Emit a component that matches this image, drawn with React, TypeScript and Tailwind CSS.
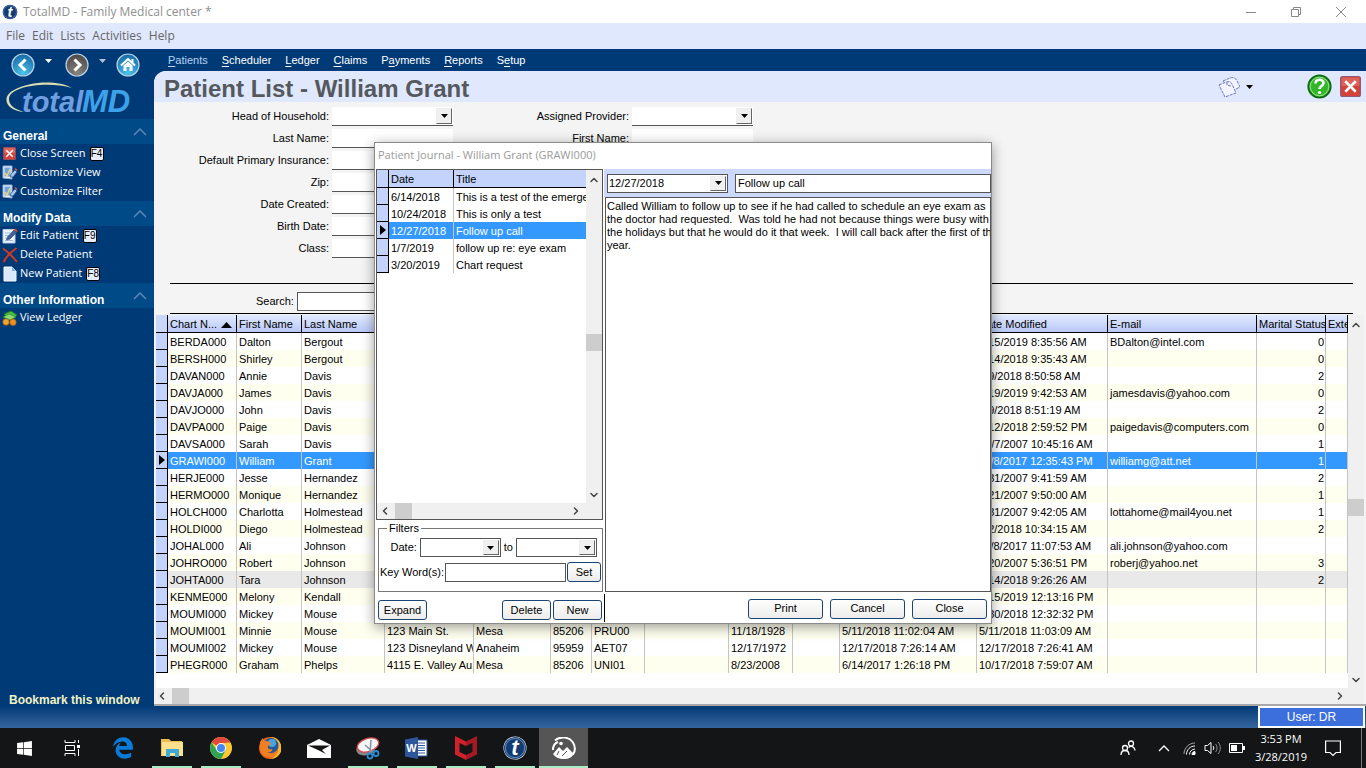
import React from 'react';
import clsx from 'clsx';
import { ChevronDown, ChevronLeft, ChevronRight, ChevronUp } from 'lucide-react';
import { FaEdgeLegacy, FaWindows } from 'react-icons/fa6';

interface Patient {
  chart: string;
  first: string;
  last: string;
  address?: string;
  city?: string;
  zip?: string;
  insurance?: string;
  birth?: string;
  created?: string;
  modified: string;
  email?: string;
  marital?: string;
}

const patients: Patient[] = [
  { chart: 'BERDA000', first: 'Dalton', last: 'Bergout', modified: '3/15/2019 8:35:56 AM', email: 'BDalton@intel.com', marital: '0' },
  { chart: 'BERSH000', first: 'Shirley', last: 'Bergout', modified: '5/14/2018 9:35:43 AM', marital: '0' },
  { chart: 'DAVAN000', first: 'Annie', last: 'Davis', modified: '5/9/2018 8:50:58 AM', marital: '2' },
  { chart: 'DAVJA000', first: 'James', last: 'Davis', modified: '3/19/2019 9:42:53 AM', email: 'jamesdavis@yahoo.com', marital: '0' },
  { chart: 'DAVJO000', first: 'John', last: 'Davis', modified: '5/9/2018 8:51:19 AM', marital: '2' },
  { chart: 'DAVPA000', first: 'Paige', last: 'Davis', modified: '6/12/2018 2:59:52 PM', email: 'paigedavis@computers.com', marital: '0' },
  { chart: 'DAVSA000', first: 'Sarah', last: 'Davis', modified: '12/7/2007 10:45:16 AM', marital: '1' },
  { chart: 'GRAWI000', first: 'William', last: 'Grant', modified: '11/8/2017 12:35:43 PM', email: 'williamg@att.net', marital: '1' },
  { chart: 'HERJE000', first: 'Jesse', last: 'Hernandez', modified: '7/31/2007 9:41:59 AM', marital: '2' },
  { chart: 'HERMO000', first: 'Monique', last: 'Hernandez', modified: '8/21/2007 9:50:00 AM', marital: '1' },
  { chart: 'HOLCH000', first: 'Charlotta', last: 'Holmestead', modified: '7/31/2007 9:42:05 AM', email: 'lottahome@mail4you.net', marital: '1' },
  { chart: 'HOLDI000', first: 'Diego', last: 'Holmestead', modified: '5/2/2018 10:34:15 AM', marital: '2' },
  { chart: 'JOHAL000', first: 'Ali', last: 'Johnson', modified: '11/8/2017 11:07:53 AM', email: 'ali.johnson@yahoo.com' },
  { chart: 'JOHRO000', first: 'Robert', last: 'Johnson', modified: '8/20/2007 5:36:51 PM', email: 'roberj@yahoo.net', marital: '3' },
  { chart: 'JOHTA000', first: 'Tara', last: 'Johnson', modified: '5/14/2018 9:26:26 AM', marital: '2' },
  { chart: 'KENME000', first: 'Melony', last: 'Kendall', modified: '3/15/2019 12:13:16 PM' },
  { chart: 'MOUMI000', first: 'Mickey', last: 'Mouse', modified: '5/30/2018 12:32:32 PM' },
  { chart: 'MOUMI001', first: 'Minnie', last: 'Mouse', address: '123 Main St.', city: 'Mesa', zip: '85206', insurance: 'PRU00', birth: '11/18/1928', created: '5/11/2018 11:02:04 AM', modified: '5/11/2018 11:03:09 AM' },
  { chart: 'MOUMI002', first: 'Mickey', last: 'Mouse', address: '123 Disneyland W', city: 'Anaheim', zip: '95959', insurance: 'AET07', birth: '12/17/1972', created: '12/17/2018 7:26:14 AM', modified: '12/17/2018 7:26:41 AM' },
  { chart: 'PHEGR000', first: 'Graham', last: 'Phelps', address: '4115 E. Valley Au', city: 'Mesa', zip: '85206', insurance: 'UNI01', birth: '8/23/2008', created: '6/14/2017 1:26:18 PM', modified: '10/17/2018 7:59:07 AM' },
];

const columns: { key: keyof Patient | null; title: string; width: string }[] = [
  { key: 'chart', title: 'Chart N...', width: 'w-[69px]' },
  { key: 'first', title: 'First Name', width: 'w-[65px]' },
  { key: 'last', title: 'Last Name', width: 'w-[83px]' },
  { key: 'address', title: '', width: 'w-[89px]' },
  { key: 'city', title: '', width: 'w-[77px]' },
  { key: 'zip', title: '', width: 'w-[41px]' },
  { key: 'insurance', title: '', width: 'w-[53px]' },
  { key: null, title: '', width: 'w-[84px]' },
  { key: 'birth', title: '', width: 'w-[64px]' },
  { key: null, title: '', width: 'w-[47px]' },
  { key: 'created', title: '', width: 'w-[137px]' },
  { key: 'modified', title: 'Date Modified', width: 'w-[131px]' },
  { key: 'email', title: 'E-mail', width: 'w-[149px]' },
  { key: 'marital', title: 'Marital Status', width: 'w-[69px]' },
  { key: null, title: 'Exte', width: 'w-auto' },
];

const journal = [
  { date: '6/14/2018', title: 'This is a test of the emergen' },
  { date: '10/24/2018', title: 'This is only a test' },
  { date: '12/27/2018', title: 'Follow up call' },
  { date: '1/7/2019', title: 'follow up re: eye exam' },
  { date: '3/20/2019', title: 'Chart request' },
];

const note = [
  'Called William to follow up to see if he had called to schedule an eye exam as',
  'the doctor had requested.  Was told he had not because things were busy with',
  'the holidays but that he would do it that week.  I will call back after the first of the',
  'year.',
].join('\n');

/* ---------- small icons ---------- */

const TLogo = ({ size }: { size: number }) => (
  <svg width={size} height={size} viewBox="0 0 24 24">
    <circle cx="12" cy="12" r="11.5" fill="#fff" />
    <circle cx="12" cy="12" r="11" fill="#123a73" />
    <circle cx="12" cy="12" r="9.6" fill="none" stroke="#7fa3cf" strokeWidth="0.8" />
    <text x="12" y="19" textAnchor="middle" fontFamily="Liberation Sans, sans-serif" fontWeight="bold" fontStyle="italic" fontSize="22" fill="#fff">t</text>
  </svg>
);

const RoundIcon = ({ kind }: { kind: 'back' | 'forward' | 'home' }) => (
  <svg width="24" height="24" viewBox="0 0 24 24">
    <defs>
      <radialGradient id={`round-${kind}`} cx="50%" cy="85%" r="85%">
        <stop offset="0" stopColor={kind === 'forward' ? '#8a8480' : '#4cc4ea'} />
        <stop offset="1" stopColor={kind === 'forward' ? '#4c4745' : '#1468a4'} />
      </radialGradient>
    </defs>
    <circle cx="12" cy="12" r="11" fill={`url(#round-${kind})`} stroke="#b9d4e8" strokeWidth="1.2" />
    {kind === 'back' && <path d="M14.5 6.5 9 12l5.500 5.500" fill="none" stroke="#fff" strokeWidth="3" />}
    {kind === 'forward' && <path d="M9.500 6.500 15 12l-5.500 5.500" fill="none" stroke="#fff" strokeWidth="3" />}
    {kind === 'home' && (
      <>
        <path d="M5 12.500 12 6l7 6.500" fill="none" stroke="#fff" strokeWidth="2" />
        <path d="M7.500 12.500 12 8.500l4.500 4V18h-3v-4h-3v4h-3z" fill="#fff" />
        <path d="M15.500 6h2v4l-2-2z" fill="#fff" />
      </>
    )}
  </svg>
);

const Caret = ({ className = '' }: { className?: string }) => (
  <svg width="7" height="4" viewBox="0 0 7 4" className={className} fill="currentColor">
    <path d="M0 0h7L3.500 4z" />
  </svg>
);

const Marker = () => (
  <svg width="6" height="10" viewBox="0 0 6 10" className="mx-auto block">
    <path d="M0 0v10l6-5z" />
  </svg>
);

const CloseIcon = ({ size }: { size: number }) => (
  <svg width={size} height={size} viewBox="0 0 20 20">
    <rect x="0.500" y="0.500" width="19" height="19" rx="2" fill="#d3423a" stroke="#8c5b78" />
    <rect x="1.500" y="1.500" width="17" height="8" rx="1" fill="#dd6259" />
    <path d="m5 5 10 10M15 5 5 15" stroke="#fff" strokeWidth="2.400" />
  </svg>
);

const CustomizeIcon = () => (
  <svg width="16" height="16" viewBox="0 0 16 16">
    <path d="M1 1h9v13l-9-1z" fill="#eef4fd" stroke="#8fabd2" />
    <path d="M2.500 2.500h6v9h-6z" fill="#6ea3e2" />
    <path d="m3 8 2 3 3-7" fill="none" stroke="#f2d36a" strokeWidth="1.500" />
    <path d="m8 12 1-3 4-4 2 2-4 5z" fill="#a8c4ea" stroke="#26497e" strokeWidth="0.700" />
    <path d="m12.500 4 1-1 2 2-1 1z" fill="#cc5f54" />
  </svg>
);

const EditIcon = () => (
  <svg width="16" height="16" viewBox="0 0 16 16">
    <path d="M1 1.500h12V15H1z" fill="#eef4fc" stroke="#b5c9e4" />
    <path d="M3 5h6M3 7.500h4M3 10h3M3 12.500h8" stroke="#9fb8dc" />
    <path d="m4.500 12 1-3L12 2l2.500 2.500L8 11z" fill="#3f6396" stroke="#1f3f70" strokeWidth="0.600" />
    <path d="m12 2 1.500-1.500L16 3l-1.500 1.500z" fill="#c9402f" />
  </svg>
);

const DeleteIcon = () => (
  <svg width="16" height="16" viewBox="0 0 16 16">
    <path d="M1 1.500C6 5 11 10 15 15M14.500 1C9 5 4 10 1.500 15" fill="none" stroke="#d0391f" strokeWidth="2" />
  </svg>
);

const NewIcon = () => (
  <svg width="16" height="16" viewBox="0 0 16 16">
    <path d="M2 1h8l4 4v10H2z" fill="#d9e8fa" stroke="#f3f8ff" />
    <path d="M10 1v4h4z" fill="#7fa9dc" />
  </svg>
);

const LedgerIcon = () => (
  <svg width="16" height="16" viewBox="0 0 16 16">
    <path d="m2 4 7-3 6 4-6 5z" fill="#4fbf4a" stroke="#1f7a2a" />
    <path d="m1 7 6-3 7 3-6 3z" fill="#8bdc6c" stroke="#2b8f35" strokeWidth="0.700" />
    <circle cx="4" cy="12" r="3.200" fill="#f3a42a" stroke="#a8620d" strokeWidth="0.700" />
    <circle cx="11" cy="12.300" r="3.200" fill="#ee8f22" stroke="#a8620d" strokeWidth="0.700" />
  </svg>
);

/* ---------- shared controls ---------- */

const Combo = ({ className, boxed, value = '', label }: { className: string; boxed?: boolean; value?: string; label: string }) => (
  <div className={clsx('relative h-[19px] bg-white', className, boxed ? 'border border-[#555]' : 'border-b border-[#555]')}>
    <select aria-label={label} className="block h-full w-full appearance-none bg-transparent px-px text-[11px] outline-none" defaultValue={value}>
      <option value={value}>{value}</option>
    </select>
    <span className="pointer-events-none absolute top-px right-px bottom-px flex w-4 items-center justify-center border border-t-[#eee] border-r-[#666] border-b-[#666] border-l-[#eee] bg-[#f0f0f0]">
      <Caret />
    </span>
  </div>
);

const PushButton = ({ children, className }: { children: React.ReactNode; className: string }) => (
  <button className={clsx('h-5 rounded-[3px] border border-[#1c4474] bg-linear-to-b from-white to-[#ececea] text-[11px] leading-none', className)}>
    {children}
  </button>
);

const VScroll = ({ className, thumb }: { className?: string; thumb: string }) => (
  <div className={clsx('flex w-4 shrink-0 flex-col items-center bg-[#f0f0f0] text-[#444]', className)}>
    <ChevronUp size={12} strokeWidth={3} className="mt-1 shrink-0" />
    <div className="flex w-full flex-1 flex-col">
      <div className={thumb} />
      <div className="h-[17px] w-full bg-[#cdcdcd]" />
    </div>
    <ChevronDown size={12} strokeWidth={3} className="mb-0.5 shrink-0" />
  </div>
);

const HScroll = ({ className }: { className?: string }) => (
  <div className={clsx('flex h-4 shrink-0 items-center bg-[#f0f0f0] text-[#444]', className)}>
    <ChevronLeft size={12} strokeWidth={3} className="mx-0.5" />
    <div className="ml-0.5 h-full w-[17px] bg-[#cdcdcd]" />
    <ChevronRight size={12} strokeWidth={3} className="ml-auto" />
  </div>
);

const Gutter = ({ active }: { active?: boolean }) => (
  <td className="border-r border-b border-black bg-[#c3d3fb] p-0">{active && <Marker />}</td>
);

/* ---------- sidebar ---------- */

const sections = [
  {
    title: 'General',
    items: [
      { label: 'Close Screen', key: 'F4', icon: <CloseIcon size={13} /> },
      { label: 'Customize View', icon: <CustomizeIcon /> },
      { label: 'Customize Filter', icon: <CustomizeIcon /> },
    ],
  },
  {
    title: 'Modify Data',
    items: [
      { label: 'Edit Patient', key: 'F9', icon: <EditIcon /> },
      { label: 'Delete Patient', icon: <DeleteIcon /> },
      { label: 'New Patient', key: 'F8', icon: <NewIcon /> },
    ],
  },
  { title: 'Other Information', items: [{ label: 'View Ledger', icon: <LedgerIcon /> }] },
];

const Sidebar = () => (
  <aside className="flex w-[154px] shrink-0 flex-col bg-[#003a76]">
    <div className="flex h-8 items-center pl-[11px] text-white">
      <button aria-label="Back"><RoundIcon kind="back" /></button>
      <Caret className="mx-[10px] mb-2" />
      <button aria-label="Forward" className="ml-[3px]"><RoundIcon kind="forward" /></button>
      <Caret className="mx-[10px] mb-2 opacity-70" />
      <button aria-label="Home"><RoundIcon kind="home" /></button>
    </div>
    <svg width="140" height="38" viewBox="0 0 140 38" className="shrink-0">
      <path d="M72 7C48 0 9 5 9 18c0 6 5 10 15 13C5 30 1 15 14 9 30 0 58-1 72 7z" fill="#d9dcae" />
      <g fontFamily="Liberation Sans, sans-serif" fontStyle="italic" fontWeight="bold">
        <text x="22" y="31" fontSize="29" fill="#6f9fe0">total</text>
        <text x="82" y="31" fontSize="31" fill="#3ea2ea">MD</text>
      </g>
    </svg>
    {sections.map((section) => (
      <section key={section.title}>
        <h2 className="flex h-[25px] items-end justify-between bg-[#004a88] pl-[3px] text-[12px] leading-4 font-bold text-white">
          {section.title}
          <svg width="14" height="8" viewBox="0 0 14 8" className="mr-[7px] mb-2">
            <path d="m1 7 6-6 6 6" fill="none" stroke="#5c87b4" strokeWidth="1.500" />
          </svg>
        </h2>
        <ul>
          {section.items.map((item: { label: string; key?: string; icon: React.ReactNode }) => (
            <li key={item.label} className="flex h-[19px] items-center">
              <span className="flex w-5 shrink-0 justify-center pr-px">{item.icon}</span>
              <a href="#" className="font-['Open_Sans',sans-serif] text-[11px] text-white">{item.label}</a>
              {item.key && (
                <kbd className="ml-1 flex h-3.5 w-3.5 items-center justify-center rounded-[2px] border border-black bg-[#e6ecf8] font-['Liberation_Sans',sans-serif] text-[10px] leading-none text-black">
                  {item.key}
                </kbd>
              )}
            </li>
          ))}
        </ul>
      </section>
    ))}
    <a href="#" className="mt-auto pl-[9px] text-[12px] leading-3 font-bold text-[#f2f2c4]">Bookmark this window</a>
  </aside>
);

/* ---------- patient list ---------- */

const nav = [
  ['', 'P', 'atients'],
  ['', 'S', 'cheduler'],
  ['', 'L', 'edger'],
  ['', 'C', 'laims'],
  ['P', 'a', 'yments'],
  ['', 'R', 'eports'],
  ['S', 'e', 'tup'],
];

const leftFields = ['Last Name:', 'Default Primary Insurance:', 'Zip:', 'Date Created:', 'Birth Date:', 'Class:'];

const FilterForm = () => (
  <form className="flex gap-0 pt-[3px]">
    <div className="w-[299px]">
      <div className="flex h-[22px] items-center justify-end gap-[3px]">
        <span>Head of Household:</span>
        <Combo label="Head of Household" className="w-[121px]" />
      </div>
      {leftFields.map((name) => (
        <label key={name} className="flex h-[22px] items-center justify-end gap-[3px]">
          {name}
          <input className="h-[19px] w-[121px] border-b border-[#555] bg-white outline-none" />
        </label>
      ))}
    </div>
    <div className="w-[300px]">
      <div className="flex h-[22px] items-center justify-end gap-[3px]">
        <span>Assigned Provider:</span>
        <Combo label="Assigned Provider" className="w-[121px]" />
      </div>
      <label className="flex h-[22px] items-center justify-end gap-[3px]">
        First Name:
        <input className="h-[19px] w-[121px] border-b border-[#555] bg-white outline-none" />
      </label>
    </div>
  </form>
);

const PatientTable = () => (
  <table className="w-full table-fixed border-separate border-spacing-0 text-left">
    <colgroup>
      <col className="w-3" />
      {columns.map((col, i) => (
        <col key={i} className={col.width} />
      ))}
    </colgroup>
    <thead>
      <tr className="h-[18px]">
        <th className="border-r border-b border-black bg-[#c9d7fb] p-0" />
        {columns.map((col, i) => (
          <th
            key={i}
            className="overflow-hidden border-r border-b border-black bg-linear-to-b from-[#e2eaff] to-[#b9c9f6] p-0 pl-0.5 leading-4 font-normal whitespace-nowrap"
          >
            {col.title}
            {i === 0 && (
              <svg width="11" height="6" viewBox="0 0 11 6" className="ml-1 inline-block align-middle">
                <path d="M5.500 0 11 6H0z" />
              </svg>
            )}
          </th>
        ))}
      </tr>
    </thead>
    <tbody>
      {patients.map((p, row) => {
        const selected = p.chart === 'GRAWI000';
        return (
          <tr
            key={p.chart}
            className={clsx(
              'h-[17px]',
              selected ? 'bg-[#3399ff] text-white' : p.chart === 'JOHTA000' ? 'bg-[#e9e9e9]' : row % 2 ? 'bg-[#fffff0]' : 'bg-white'
            )}
          >
            <Gutter active={selected} />
            {columns.map((col, i) => (
              <td
                key={i}
                className={clsx(
                  'overflow-hidden border-r border-[#c4c4c4] p-0 pl-0.5 leading-4 whitespace-nowrap',
                  col.key === 'marital' && 'pr-px text-right'
                )}
              >
                {col.key ? p[col.key] : ''}
              </td>
            ))}
          </tr>
        );
      })}
    </tbody>
  </table>
);

/* ---------- journal window ---------- */

const JournalDialog = () => (
  <div
    role="dialog"
    aria-label="Patient Journal"
    className="absolute inset-x-0 top-[142px] mx-auto w-[618px] border border-[#8a8a8a] bg-white shadow-[0_3px_12px_rgba(0,0,0,0.4)]"
  >
    <h2 className="h-[26px] pl-[3px] font-['Open_Sans',sans-serif] text-[11px] leading-6 text-[#999]">
      Patient Journal - William Grant (GRAWI000)
    </h2>
    <div className="flex">
      <div className="flex w-[229px] shrink-0 flex-col pl-px">
        <div className="mr-px flex h-[351px] flex-col border border-[#555]">
          <div className="flex min-h-0 flex-1">
            <div className="flex-1">
              <table className="w-full table-fixed border-separate border-spacing-0 text-left">
                <colgroup>
                  <col className="w-3" />
                  <col className="w-[65px]" />
                  <col />
                </colgroup>
                <thead>
                  <tr className="h-[18px]">
                    <th className="border-r border-b border-black bg-[#c3d3fb] p-0" />
                    <th className="border-r border-b border-black bg-[#c3d3fb] p-0 pl-0.5 leading-4 font-normal">Date</th>
                    <th className="border-b border-black bg-[#c3d3fb] p-0 pl-0.5 leading-4 font-normal">Title</th>
                  </tr>
                </thead>
                <tbody>
                  {journal.map((entry) => {
                    const selected = entry.date === '12/27/2018';
                    return (
                      <tr key={entry.date} className={clsx('h-[17px]', selected && 'bg-[#3399ff] text-white')}>
                        <Gutter active={selected} />
                        <td className="overflow-hidden border-r border-[#c4c4c4] p-0 pl-0.5 leading-4">{entry.date}</td>
                        <td className="overflow-hidden p-0 pl-0.5 leading-4 whitespace-nowrap">{entry.title}</td>
                      </tr>
                    );
                  })}
                </tbody>
              </table>
            </div>
            <VScroll thumb="basis-[49%]" />
          </div>
          <HScroll className="pr-5" />
        </div>

        <fieldset className="mt-0.5 mr-px ml-0.5 h-[70px] border border-[#777]">
          <legend className="ml-2 px-0.5 leading-[13px]">Filters</legend>
          <div className="mt-[3px] flex items-center justify-end gap-[3px] pr-[5px]">
            <span>Date:</span>
            <Combo boxed label="From date" className="w-[81px]" />
            <span>to</span>
            <Combo boxed label="To date" className="w-[81px]" />
          </div>
          <div className="mt-[5px] flex items-center justify-end gap-px pr-px whitespace-nowrap">
            <label className="flex items-center gap-px">
              Key Word(s):
              <input className="h-[19px] w-[121px] border border-[#555] outline-none" />
            </label>
            <PushButton className="w-[34px]">Set</PushButton>
          </div>
        </fieldset>
        <div className="mt-2 flex items-center gap-0.5 pr-0.5 pl-0.5">
          <PushButton className="w-[49px]">Expand</PushButton>
          <PushButton className="ml-auto w-[49px]">Delete</PushButton>
          <PushButton className="w-[49px]">New</PushButton>
        </div>
      </div>

      <div className="flex min-w-0 flex-1 flex-col">
        <div className="flex h-7 items-center gap-[7px] bg-[#ccd9fc] pl-[3px]">
          <Combo boxed label="Entry date" value="12/27/2018" className="w-[121px]" />
          <input aria-label="Entry title" defaultValue="Follow up call" className="h-[19px] min-w-0 flex-1 border border-[#555] bg-white px-0.5 outline-none" />
        </div>
        <textarea
          aria-label="Journal note"
          defaultValue={note}
          className="ml-px block h-[395px] resize-none overflow-hidden border border-[#555] py-0.5 pl-px leading-[13px] whitespace-pre outline-none"
        />
        <div className="flex h-[31px] items-center">
          <div className="h-7 border-l border-black" />
          <div className="ml-auto flex gap-[7px] pt-0.5 pr-1">
            <PushButton className="w-[75px]">Print</PushButton>
            <PushButton className="w-[75px]">Cancel</PushButton>
            <PushButton className="w-[75px]">Close</PushButton>
          </div>
        </div>
      </div>
    </div>
  </div>
);

/* ---------- taskbar ---------- */

const tasks: { name: string; open?: boolean; active?: boolean; icon: React.ReactNode }[] = [
  { name: 'Edge', icon: <FaEdgeLegacy size={22} color="#0a7bd8" /> },
  {
    name: 'File Explorer',
    open: true,
    icon: (
      <svg width="22" height="20" viewBox="0 0 22 20">
        <path d="M0 1h8l2 2h11v15H0z" fill="#e9bd4e" />
        <path d="M1 4h21v14H1z" fill="#fbe08e" />
        <path d="M5 19v-8h13v8h-4v-4H9v4z" fill="#3fa9d8" />
      </svg>
    ),
  },
  {
    name: 'Chrome',
    open: true,
    icon: (
      <svg width="22" height="22" viewBox="0 0 22 22">
        <circle cx="11" cy="11" r="11" fill="#fcc934" />
        <path d="M11 11 1.500 5.500A11 11 0 0 1 20.500 5.500L11 6z" fill="#e04a3c" />
        <path d="M1.500 5.500A11 11 0 0 0 11 22l4.500-8.500L11 11 6.500 13z" fill="#2fa455" />
        <circle cx="11" cy="11" r="5" fill="#fff" />
        <circle cx="11" cy="11" r="4" fill="#4688f1" />
      </svg>
    ),
  },
  {
    name: 'Firefox',
    icon: (
      <svg width="22" height="22" viewBox="0 0 22 22">
        <circle cx="11" cy="11" r="11" fill="#e8641b" />
        <path d="M11 0a11 11 0 0 1 8 19c-3 3-8 3-8 3 6-2 9-8 8-14-1-4-4-7-8-8z" fill="#f9b72b" />
        <circle cx="12" cy="8.500" r="7.500" fill="#245a9c" />
        <circle cx="13" cy="6" r="4" fill="#4aa3dc" />
        <path d="M1 5c1-2 2-3 3-4 0 2 1 3 3 3 2 0 4 1 5 3l-3 2c-1 2 1 4 4 3 1 2-2 4-5 3 4 3 9 1 11-3 0 5-4 9-9 8-6 0-9-5-9-9z" fill="#f07f22" />
      </svg>
    ),
  },
  {
    name: 'Mail',
    icon: (
      <svg width="24" height="19" viewBox="0 0 24 19">
        <path d="M0 6 12 0l12 6v13H0z" fill="#fff" />
        <path d="M1 6.500h22L15 11l4 4-8-4z" fill="#151515" />
      </svg>
    ),
  },
  {
    name: 'Snipping Tool',
    open: true,
    icon: (
      <svg width="24" height="23" viewBox="0 0 24 23">
        <ellipse cx="10" cy="11" rx="10" ry="7" fill="#8b8585" transform="rotate(-20 10 11)" />
        <ellipse cx="12" cy="8" rx="11" ry="6.500" fill="#f6f6f6" stroke="#d44a4a" strokeWidth="1.300" transform="rotate(-18 12 8)" />
        <path d="m15 3-1 13M9 8l9 8" stroke="#8496a8" strokeWidth="1.600" />
        <circle cx="14" cy="19" r="2.500" fill="none" stroke="#2a8ad4" strokeWidth="1.800" />
        <circle cx="20" cy="16.500" r="2.500" fill="none" stroke="#2a8ad4" strokeWidth="1.800" />
      </svg>
    ),
  },
  {
    name: 'Word',
    open: true,
    icon: (
      <svg width="23" height="22" viewBox="0 0 23 22">
        <path d="M12 3h10v16H12z" fill="#fff" stroke="#2b579a" />
        <path d="M13 6h7M13 8.500h7M13 11h7M13 13.500h7M13 16h7" stroke="#2b579a" />
        <path d="M0 2.500 13 0v22L0 19.500z" fill="#2b579a" />
        <text x="6.500" y="15" textAnchor="middle" fontFamily="Liberation Sans, sans-serif" fontWeight="bold" fontSize="11" fill="#fff">W</text>
      </svg>
    ),
  },
  {
    name: 'McAfee',
    open: true,
    icon: (
      <svg width="22" height="24" viewBox="0 0 22 24">
        <path d="M0 0 11 5.500V10L4.500 7v9l6.500 3v5L0 18.500z" fill="#d0222c" />
        <path d="M22 0 11 5.500V10l6.500-3v9L11 19v5l11-5.500z" fill="#a51a22" />
      </svg>
    ),
  },
  { name: 'TotalMD', open: true, icon: <TLogo size={24} /> },
  {
    name: 'Photos',
    open: true,
    active: true,
    icon: (
      <svg width="24" height="22" viewBox="0 0 24 22">
        <path d="M3 3.500C8-1 17-.500 21 5.500c3 5 2 9 0 12M1 13c0-4 2-7 5-8" fill="none" stroke="#fff" strokeWidth="2" />
        <path d="M1 17 7 10l4 4 4-4 7 7c-2 3-5 5-10 5S3 20 1 17z" fill="#fff" />
        <circle cx="9" cy="6.500" r="1.800" fill="#fff" />
        <path d="m7 14-2 4M15 14l-5 5" stroke="#555" />
      </svg>
    ),
  },
];

const Taskbar = () => (
  <footer className="flex h-10 items-center bg-[#141516] text-white">
    <button aria-label="Start" className="flex h-full w-12 items-center justify-center"><FaWindows size={17} /></button>
    <button aria-label="Task view" className="mr-0.5 flex h-full w-12 items-center justify-center">
      <svg width="17" height="16" viewBox="0 0 17 16" fill="none" stroke="#fff">
        <path d="M1 0v2.500h10V0M1 16v-2.500h10V16M1.500 5.500h9v5h-9zM14.500 0v3M14.500 9v7" />
        <path d="M13 5h3v3h-3z" fill="#fff" stroke="none" />
      </svg>
    </button>
    {tasks.map((task) => (
      <button
        key={task.name}
        aria-label={task.name}
        className={clsx('flex h-full w-[49px] flex-col items-center', task.active && 'bg-[#555]')}
      >
        <span className="flex flex-1 items-center pt-0.5">{task.icon}</span>
        <span className={clsx('h-0.5', task.active ? 'w-full' : 'w-10', task.open && 'bg-[#a9ecc4]')} />
      </button>
    ))}
    <div className="ml-auto flex h-full items-center">
      <svg width="16" height="16" viewBox="0 0 16 16" fill="none" stroke="#fff" strokeWidth="1.300">
        <circle cx="5" cy="8" r="2.500" />
        <path d="M1 15c0-6 8-6 8 0" />
        <circle cx="11" cy="3.500" r="2.500" />
        <path d="M8.500 7.500c3-2.500 6.500 0 6.500 3" />
      </svg>
      <svg width="12" height="7" viewBox="0 0 12 7" className="ml-[22px]" fill="none" stroke="#fff" strokeWidth="1.300">
        <path d="m1 6 5-5 5 5" />
      </svg>
      <svg width="13" height="13" viewBox="0 0 13 13" className="ml-[13px]" fill="none" stroke="#fff">
        <path d="M1 12C1 6 6 1 12 1" opacity="0.600" />
        <path d="M3.500 12.500c0-5 4-8.500 8.500-8.500M6.500 12.500c0-3 2.500-5.500 5.500-5.500" />
        <path d="M9 12.500c0-2 1.500-3 3-3v3z" fill="#fff" />
      </svg>
      <svg width="17" height="14" viewBox="0 0 17 14" className="ml-2" fill="none" stroke="#fff">
        <path d="M1 4.500h2.500L7 1.500v11l-3.500-3H1z" />
        <path d="M9 5c1 1 1 3 0 4" />
        <path d="M11.500 3c2 2 2 6 0 8M14 1c3 3 3 9 0 12" opacity="0.500" />
      </svg>
      <svg width="16" height="10" viewBox="0 0 16 10" className="ml-2">
        <path d="M.500.500h13v9H.500z" fill="none" stroke="#fff" />
        <path d="M2 2h6v6H2zM14 3h2v4h-2z" fill="#fff" />
      </svg>
      <time className="ml-[9px] w-[54px] text-center font-['Open_Sans',sans-serif] text-[11px] leading-[18px] whitespace-nowrap">
        3:53 PM
        <br />
        3/28/2019
      </time>
      <svg width="16" height="17" viewBox="0 0 16 17" className="ml-[17px]" fill="none" stroke="#fff" strokeWidth="1.200">
        <path d="M.600 1h14.800v11.500H11l-3 3-3-3H.600z" />
      </svg>
      <div className="mr-1 ml-5 h-full border-l border-[#777]" />
    </div>
  </footer>
);

const App: React.FC = () => {
  return (
    <div className="relative flex min-h-screen flex-col overflow-hidden bg-[#003a76] font-['Liberation_Sans',Arial,sans-serif] text-[11px] text-black">
      {/* Window title */}
      <header className="flex h-[23px] items-center bg-white pl-0.5 font-['Open_Sans',sans-serif] text-[12px] text-[#8f8f8f]">
        <TLogo size={16} />
        <span className="ml-[5px]">TotalMD - Family Medical center *</span>
        <div className="mr-5 ml-auto flex items-center gap-[35px]">
          <svg width="10" height="10" viewBox="0 0 10 10" stroke="#888"><path d="M0 5.500h10" /></svg>
          <svg width="10" height="10" viewBox="0 0 10 10" fill="none" stroke="#888"><path d="M.500 2.500h7v7h-7zM2.500 2.500v-2h7v7h-2" /></svg>
          <svg width="10" height="10" viewBox="0 0 10 10" stroke="#888"><path d="m0 0 10 10M10 0 0 10" /></svg>
        </div>
      </header>
      <nav className="flex h-[26px] items-center gap-[7px] bg-[#e0e8fd] pl-1.5 font-['Open_Sans',sans-serif] text-[12px] text-[#666]">
        {['File', 'Edit', 'Lists', 'Activities', 'Help'].map((item) => (
          <a key={item} href="#">{item}</a>
        ))}
      </nav>

      <div className="flex flex-1">
        <Sidebar />
        <main className="flex min-w-0 flex-1 flex-col">
          <nav className="flex h-[22px] items-center gap-3.5 pt-px pl-3.5 text-white">
            {nav.map(([before, accel, after], i) => (
              <a key={accel} href="#" className={clsx(i === 0 && 'text-[#b5d3f5]')}>
                {before}
                <u className="underline-offset-2">{accel}</u>
                {after}
              </a>
            ))}
          </nav>
          <div className="flex flex-1 flex-col rounded-tl-xl bg-[#f4f4f4]">
            <div className="flex h-[31px] items-center rounded-tl-xl bg-[#e0e8fd] pr-[5px] pl-2.5">
              <h1 className="pt-1 text-[24px] leading-none font-bold text-[#55585c]">Patient List - William Grant</h1>
              <button aria-label="Copy" className="ml-auto flex items-center gap-1.5">
                <svg width="22" height="22" viewBox="0 0 22 22" fill="#f2f4ff" stroke="#6c74c4" strokeDasharray="3 1">
                  <path d="m5 5 7-3c3-1 6 0 7 3l3 6-8 4z" />
                  <path d="m1 9 7-3c3-1 5 0 6 2l4 9-11 4z" />
                  <path d="M9 6v3l4 1" fill="none" />
                </svg>
                <Caret />
              </button>
              <button aria-label="Help" className="ml-[54px]">
                <svg width="25" height="25" viewBox="0 0 25 25">
                  <circle cx="12.500" cy="12.500" r="11.200" fill="#35b52a" stroke="#0f6b17" strokeWidth="1.800" />
                  <circle cx="12.500" cy="12.500" r="9.300" fill="none" stroke="#9be58c" />
                  <path d="M8.500 9.500c0-5 8-5 8-.500 0 3-4 3-4 6" fill="none" stroke="#fff" strokeWidth="2.600" />
                  <circle cx="12.500" cy="18.500" r="1.600" fill="#fff" />
                </svg>
              </button>
              <button aria-label="Close" className="ml-2"><CloseIcon size={21} /></button>
            </div>

            <FilterForm />
            <div className="mt-6 mr-[13px] ml-4 border-t border-black" />
            <label className="mt-2 flex w-[420px] items-center gap-[3px] pl-[102px]">
              Search:
              <input className="h-[19px] flex-1 border border-[#555] bg-white outline-none" />
            </label>
            <div className="mt-0.5 mr-[13px] ml-4 border-t border-black" />

            <div className="mt-px mr-0.5 ml-0.5 flex flex-1 bg-white">
              <div className="min-w-0 flex-1">
                <PatientTable />
              </div>
              <VScroll thumb="basis-[49%]" />
            </div>
            <HScroll className="mr-0.5 pr-[18px]" />
            <div className="h-0.5 bg-[#a8a8a8]" />
          </div>
        </main>
      </div>

      <div className="flex h-[22px] justify-end bg-linear-to-b from-[#003a76] to-[#35659d] pr-px">
        <div className="flex w-[107px] items-center justify-center border-2 border-white bg-[#3d6fdc] text-[12px] text-white">User: DR</div>
      </div>
      <Taskbar />
      <JournalDialog />
    </div>
  );
};

export default App;
